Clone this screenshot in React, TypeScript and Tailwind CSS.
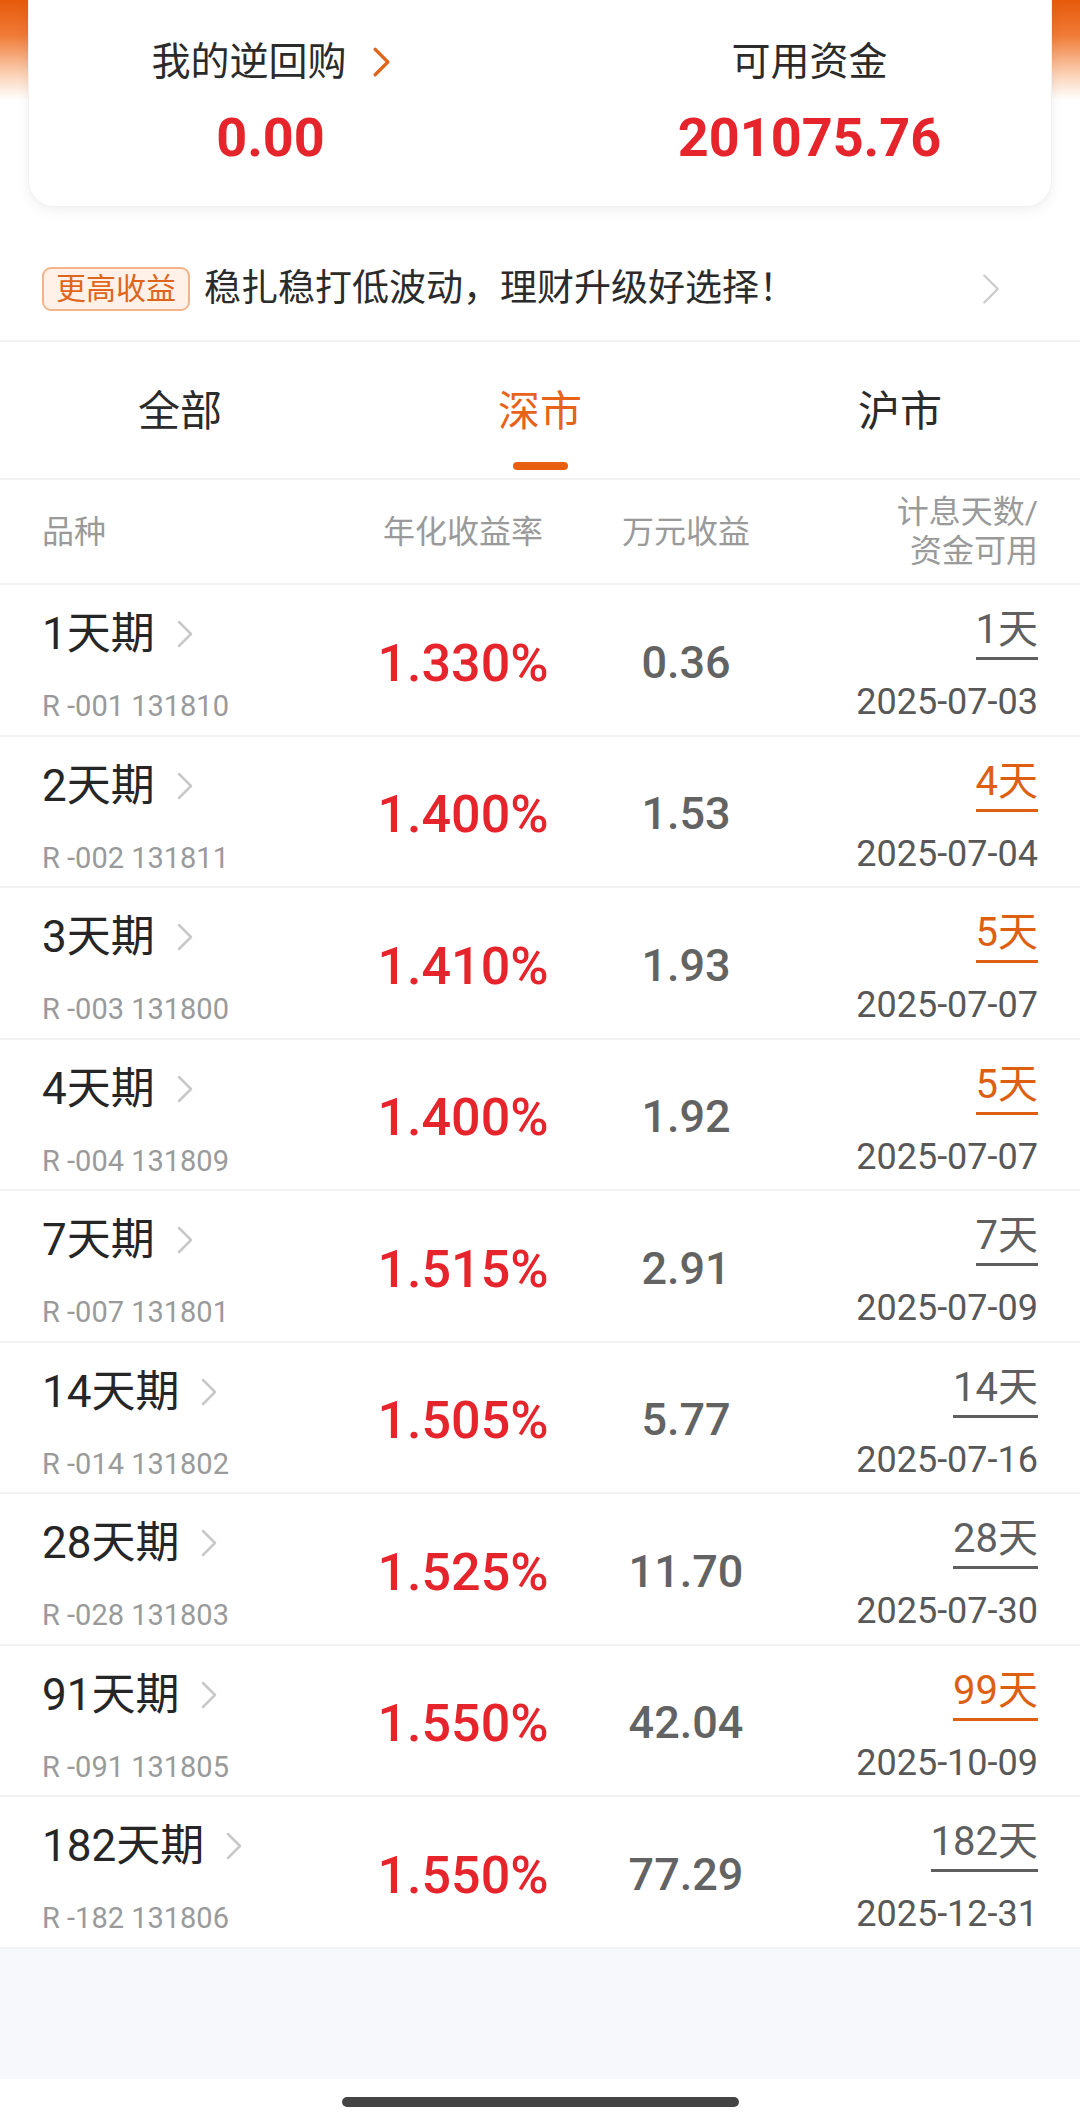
import React from 'react';

interface RepoRow {
  name: string;
  code: string;
  rate: string;
  value: string;
  days: string;
  date: string;
  hl?: boolean;
}

const rows: RepoRow[] = [
  { name: '1天期', code: 'R -001 131810', rate: '1.330%', value: '0.36', days: '1天', date: '2025-07-03' },
  { name: '2天期', code: 'R -002 131811', rate: '1.400%', value: '1.53', days: '4天', date: '2025-07-04', hl: true },
  { name: '3天期', code: 'R -003 131800', rate: '1.410%', value: '1.93', days: '5天', date: '2025-07-07', hl: true },
  { name: '4天期', code: 'R -004 131809', rate: '1.400%', value: '1.92', days: '5天', date: '2025-07-07', hl: true },
  { name: '7天期', code: 'R -007 131801', rate: '1.515%', value: '2.91', days: '7天', date: '2025-07-09' },
  { name: '14天期', code: 'R -014 131802', rate: '1.505%', value: '5.77', days: '14天', date: '2025-07-16' },
  { name: '28天期', code: 'R -028 131803', rate: '1.525%', value: '11.70', days: '28天', date: '2025-07-30' },
  { name: '91天期', code: 'R -091 131805', rate: '1.550%', value: '42.04', days: '99天', date: '2025-10-09', hl: true },
  { name: '182天期', code: 'R -182 131806', rate: '1.550%', value: '77.29', days: '182天', date: '2025-12-31' },
];

const Chevron: React.FC<{ className?: string; color: string; stroke?: number }> = ({ className, color, stroke = 3 }) => (
  <svg className={className} viewBox="0 0 16 28" fill="none">
    <polyline points="2,2 14,14 2,26" stroke={color} strokeWidth={stroke} strokeLinecap="round" strokeLinejoin="round" />
  </svg>
);

const Row: React.FC<{ row: RepoRow }> = ({ row }) => (
  <div className="flex h-[151.5px] px-[42px] border-b-2 border-[#f2f2f2]">
    <div className="w-[328px] pt-[25px]">
      <div className="flex items-center h-[48px]">
        <span className="text-[44px] leading-[48px] text-[#262626]">{row.name}</span>
        <Chevron className="w-[16px] h-[28px] ml-[22px]" color="#c8c8c8" stroke={2.5} />
      </div>
      <div className="mt-[31px] text-[29px] leading-[34px] text-[#9a9a9a]">{row.code}</div>
    </div>
    <div className="w-[186px] flex items-center justify-center pt-[8px]">
      <span className="text-[52px] leading-[60px] font-medium text-[#e5242b]">{row.rate}</span>
    </div>
    <div className="w-[260px] flex items-center justify-center pt-[6px]">
      <span className="text-[45px] leading-[52px] font-medium text-[#636363]">{row.value}</span>
    </div>
    <div className="flex-1 flex flex-col items-end pt-[24px]">
      <span
        className={
          row.hl
            ? 'inline-block text-[40px] leading-[42px] pb-[6px] border-b-[3px] border-[#dd6012] text-[#dd6012]'
            : 'inline-block text-[40px] leading-[42px] pb-[6px] border-b-[3px] border-[#5f5f5f] text-[#5f5f5f]'
        }
      >
        {row.days}
      </span>
      <span className="mt-[22px] text-[36px] leading-[40px] text-[#585858]">{row.date}</span>
    </div>
  </div>
);

export default function App() {
  return (
    <div className="w-[1080px] min-h-[2124px] bg-white flex flex-col font-[family-name:Roboto,'Noto_Sans_CJK_SC',sans-serif]">
      {/* top summary card over the orange header fade */}
      <div className="px-[28px] bg-[linear-gradient(to_bottom,#e65a0a_0px,#f07a36_35px,#fbd3b8_75px,#ffffff_100px)]">
        <div className="grid grid-cols-2 gap-x-[56px] h-[207px] pt-[40px] bg-white rounded-b-[26px] shadow-[0_4px_14px_rgba(0,0,0,0.06)] border-x border-b border-[#f1f1f1]">
          <div className="flex flex-col items-center">
            <div className="flex items-center h-[44px]">
              <span className="text-[39px] leading-[44px] text-[#2b2b2b]">我的逆回购</span>
              <Chevron className="w-[17px] h-[30px] ml-[26px]" color="#e0651c" stroke={3} />
            </div>
            <span className="mt-[24px] text-[54px] leading-[60px] font-bold text-[#e5242b]">0.00</span>
          </div>
          <div className="flex flex-col items-center">
            <span className="text-[39px] leading-[44px] text-[#2b2b2b]">可用资金</span>
            <span className="mt-[24px] text-[54px] leading-[60px] font-bold text-[#e5242b]">201075.76</span>
          </div>
        </div>
      </div>

      {/* promo banner */}
      <div className="mt-[30px] h-[105px] flex items-center pl-[42px] pr-[80px] border-b-2 border-[#f2f2f2]">
        <span className="h-[44px] px-[12px] flex items-center rounded-[9px] border-2 border-[#f3b48c] bg-[#fff1e7] text-[30px] leading-[36px] text-[#e0651c]">
          更高收益
        </span>
        <span className="ml-[14px] text-[37px] leading-[44px] text-[#2b2b2b]">稳扎稳打低波动，理财升级好选择！</span>
        <span className="flex-1" />
        <Chevron className="w-[18px] h-[34px]" color="#cccccc" stroke={2} />
      </div>

      {/* market tabs */}
      <div className="grid grid-cols-3 h-[138px] border-b-2 border-[#f2f2f2]">
        {['全部', '深市', '沪市'].map((t) => (
          <div key={t} className="flex flex-col items-center pt-[46px]">
            <span className={t === '深市' ? 'text-[42px] leading-[48px] text-[#e8631a]' : 'text-[42px] leading-[48px] text-[#2b2b2b]'}>
              {t}
            </span>
            {t === '深市' && <span className="mt-[26px] w-[55px] h-[8px] rounded-full bg-[#e8600f]" />}
          </div>
        ))}
      </div>

      {/* column header */}
      <div className="flex h-[105px] px-[42px] items-center border-b-2 border-[#f2f2f2] text-[32px] text-[#9a9a9a]">
        <div className="w-[328px] leading-[40px]">品种</div>
        <div className="w-[186px] text-center leading-[40px] whitespace-nowrap">年化收益率</div>
        <div className="w-[260px] text-center leading-[40px]">万元收益</div>
        <div className="flex-1 text-right leading-[39px]">
          <div>计息天数/</div>
          <div>资金可用</div>
        </div>
      </div>

      {rows.map((r) => (
        <Row key={r.name} row={r} />
      ))}

      <div className="flex-1 min-h-[130px] bg-[#f6f8fc]" />
      <div className="h-[45px] flex justify-center pt-[18px]">
        <span className="w-[397px] h-[10px] rounded-full bg-[#444444]" />
      </div>
    </div>
  );
}
